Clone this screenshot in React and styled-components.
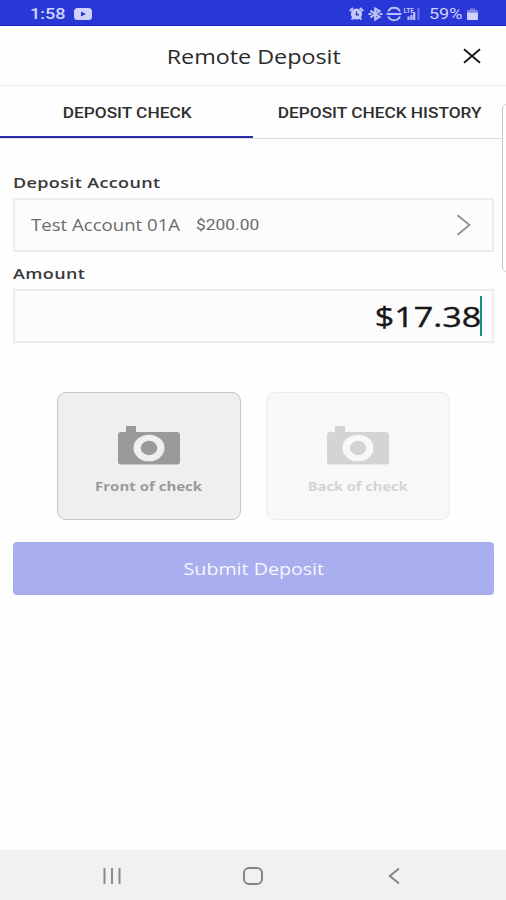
import styled, { createGlobalStyle } from 'styled-components';

const GlobalStyle = createGlobalStyle`
  * {
    box-sizing: border-box;
  }

  body {
    margin: 0;
    background: #fefefe;
    font-family: 'Open Sans', 'Noto Sans', sans-serif;
  }
`;

const Screen = styled.div`
  position: relative;
  width: 506px;
  height: 900px;
  display: flex;
  flex-direction: column;
  background: #fefefe;
  overflow: hidden;
`;

// Wide lettering, stretched from the side the text is aligned to
const Wide = styled.span`
  display: inline-block;
  white-space: pre;
  transform: scaleX(${({ $scale }) => $scale || 1.2});
  transform-origin: ${({ $from }) => $from || 'center'} center;
`;

const StatusBar = styled.div`
  height: 26px;
  padding: 2px 28px 0 30px;
  display: flex;
  align-items: center;
  justify-content: space-between;
  background: #2937d6;
  border-bottom: 1px solid #1b22c4;
  color: #d0d4fb;
  font-family: Roboto, sans-serif;
  font-size: 15px;
`;

const StatusGroup = styled.div`
  display: flex;
  align-items: center;
`;

const Clock = styled.div`
  width: 44px;
  font-weight: 500;
`;

const Battery = styled.div`
  width: 38px;
  margin-left: 8px;
`;

const Header = styled.header`
  height: 60px;
  padding-top: 1px;
  display: grid;
  grid-template-columns: 69px 1fr 68px;
  align-items: center;
  border-bottom: 1px solid #ececec;
`;

const Title = styled.h1`
  grid-column: 2;
  margin: 0;
  text-align: center;
  font-size: 20px;
  font-weight: 400;
  color: #2b2b2b;
`;

const CloseButton = styled.button`
  padding: 0;
  display: flex;
  justify-content: center;
  border: none;
  background: none;
`;

const Tabs = styled.nav`
  height: 53px;
  display: flex;
  border-bottom: 1px solid #dedede;
`;

const Tab = styled.button`
  flex: 1;
  height: 52px;
  padding: 4px 0 0 1px;
  border: none;
  border-bottom: 2px solid ${({ $active }) => ($active ? '#2a2ba8' : 'transparent')};
  background: none;
  color: #2e2e2e;
  font-family: Roboto, sans-serif;
  font-size: 14.5px;
  font-weight: 500;
`;

const Form = styled.main`
  flex: 1;
  padding: 32px 12px 0 13px;
  display: flex;
  flex-direction: column;
`;

const Label = styled.label`
  height: 22px;
  line-height: 22px;
  margin-bottom: 5px;
  font-size: 15px;
  font-weight: 600;
  letter-spacing: 0.3px;
  color: #383838;
`;

const Field = styled.div`
  height: 54px;
  display: flex;
  align-items: center;
  background: #fcfcfc;
  border: 2px solid #ededed;
`;

const AccountField = styled(Field)`
  padding: 0 21px 0 16px;
  margin-bottom: 10px;
  color: #6b6b6b;
`;

const AccountName = styled.div`
  width: 165px;
  font-size: 15.5px;
`;

const AccountBalance = styled.div`
  flex: 1;
  font-family: Roboto, sans-serif;
  font-size: 14.5px;
`;

const AmountField = styled(Field)`
  padding-right: 10px;
  justify-content: flex-end;
  font-size: 28px;
  font-weight: 500;
  color: #181818;
  -webkit-text-stroke: 0.4px #181818;
`;

const Caret = styled.div`
  width: 2px;
  height: 40px;
  margin-left: -1px;
  background: #16917d;
`;

const CheckSides = styled.div`
  margin: 49px 0 22px;
  display: flex;
  justify-content: center;
  gap: 25px;
`;

const CheckCard = styled.button`
  width: 184px;
  height: 128px;
  padding: 33px 0 0;
  display: flex;
  flex-direction: column;
  align-items: center;
  border: 1.5px solid ${({ $muted }) => ($muted ? '#ebebeb' : '#c6c6c6')};
  border-radius: 9px;
  background: ${({ $muted }) => ($muted ? '#f8f8f8' : '#efefef')};
  color: ${({ $muted }) => ($muted ? '#d4d4d4' : '#9a9a9a')};
  font-family: inherit;
  font-size: 12.5px;
  font-weight: 700;
`;

const CardLabel = styled.div`
  margin-top: 13px;
  line-height: 18px;
`;

const SubmitButton = styled.button`
  height: 53px;
  padding: 0;
  border: none;
  border-radius: 4px;
  background: #a9aeef;
  color: #f6f7ff;
  font-family: inherit;
  font-size: 17px;
`;

const NavBar = styled.footer`
  height: 50px;
  padding: 1px 41px 0;
  display: grid;
  grid-template-columns: repeat(3, 1fr);
  align-items: center;
  justify-items: center;
  background: #f1f1f1;
`;

// Edge panel handle, floats over the right side of the screen
const EdgePanel = styled.div`
  position: absolute;
  top: 104px;
  right: -8px;
  width: 12px;
  height: 168px;
  border: 1.5px solid #c9c9c9;
  border-radius: 5px;
  background: #fefefe;
`;

const YoutubeIcon = () => (
  <svg width="18" height="12" viewBox="0 0 18 12">
    <rect width="18" height="12" rx="3.5" fill="#cfd3fb" />
    <path d="M7 3.4 12 6 7 8.6Z" fill="#2937d6" />
  </svg>
);

const StatusIcons = () => (
  <svg width="72" height="16" viewBox="0 0 72 16" fill="none" stroke="#bcc2f8" strokeWidth="1.6">
    <circle cx="7.5" cy="8" r="5.6" fill="#c4c9f9" stroke="none" />
    <path d="M.8 5 4 2M14.2 5 11 2M2.5 13.5l2-1.8M12.5 13.5 10.5 11.7" strokeWidth="2.2" />
    <path d="M7.5 5.5V8.7H10" stroke="#2937d6" strokeWidth="1.4" />
    <path d="M21.5 4.6 30.5 11 26.2 13.5v-11L30.5 5 21.5 11.4" strokeWidth="2.1" />
    <path d="M19.5 8h3M30.5 8h3" strokeWidth="2" />
    <path d="M39.3 5.5a6.2 5.8 0 0 1 11.6 0M39.3 10.5a6.2 5.8 0 0 0 11.6 0M37.500 8H52.500" strokeWidth="2" />
    <path d="M59.5 14V10.500M62.5 14V9M65.2 14V6" strokeWidth="2.2" />
    <path d="M69.5 14V2" strokeWidth="2" opacity=".45" />
    <text x="54.5" y="6.5" fontSize="6.5" fontWeight="700" fontFamily="Roboto, sans-serif" fill="#c4c9f9" stroke="none">LTE</text>
  </svg>
);

const BatteryIcon = () => (
  <svg width="11" height="14" viewBox="0 0 11 14" fill="#cfd3fb">
    <path d="M3 1.5h5V3h2a1 1 0 0 1 1 1v1.5H0V4a1 1 0 0 1 1-1h2Z" opacity=".5" />
    <path d="M0 5.5h11V12a1 1 0 0 1-1 1H1a1 1 0 0 1-1-1Z" />
  </svg>
);

const CloseIcon = () => (
  <svg width="18" height="16" viewBox="0 0 18 16" fill="none" stroke="#1c1c1c" strokeWidth="2">
    <path d="M1 1.2 17 14.8M17 1.2 1 14.8" />
  </svg>
);

const ChevronIcon = () => (
  <svg width="15" height="22" viewBox="0 0 15 22" fill="none" stroke="#8f8f8f" strokeWidth="1.8">
    <path d="M1.5 1.3 13.5 11 1.5 20.7" />
  </svg>
);

const CameraIcon = ({ hole }) => (
  <svg width="62" height="39" viewBox="0 0 62 39">
    <path d="M3 6h5V0h10v6h41a3 3 0 0 1 3 3v26.5a3 3 0 0 1-3 3H3a3 3 0 0 1-3-3V9a3 3 0 0 1 3-3Z" fill="currentColor" />
    <ellipse cx="31" cy="22" rx="15.5" ry="13.3" fill={hole} />
    <ellipse cx="31" cy="22" rx="8.3" ry="7.2" fill="currentColor" />
  </svg>
);

const RecentsIcon = () => (
  <svg width="20" height="18" viewBox="0 0 20 18" stroke="#8a8a8a" strokeWidth="2">
    <path d="M2.5 1V17M10 1V17M17.5 1V17" />
  </svg>
);

const HomeIcon = () => (
  <svg width="20" height="18" viewBox="0 0 20 18" fill="none" stroke="#858585" strokeWidth="2">
    <rect x="1" y="1" width="18" height="16" rx="5" />
  </svg>
);

const BackIcon = () => (
  <svg width="12" height="18" viewBox="0 0 12 18" fill="none" stroke="#858585" strokeWidth="2">
    <path d="M11 1.5 1.8 9 11 16.5" />
  </svg>
);

const App = () => {
  return (<>
    <GlobalStyle />
    <Screen>
      <StatusBar>
        <StatusGroup>
          <Clock><Wide $from="left" $scale={1.2}>1:58</Wide></Clock>
          <YoutubeIcon />
        </StatusGroup>
        <StatusGroup>
          <StatusIcons />
          <Battery><Wide $from="left" $scale={1.2}>59%</Wide></Battery>
          <BatteryIcon />
        </StatusGroup>
      </StatusBar>

      <Header>
        <Title><Wide $scale={1.165}>Remote Deposit</Wide></Title>
        <CloseButton aria-label="Close"><CloseIcon /></CloseButton>
      </Header>

      <Tabs>
        <Tab $active><Wide $scale={1.19}>DEPOSIT CHECK</Wide></Tab>
        <Tab><Wide $scale={1.19}>DEPOSIT CHECK HISTORY</Wide></Tab>
      </Tabs>

      <Form>
        <Label><Wide $from="left">Deposit Account</Wide></Label>
        <AccountField>
          <AccountName><Wide $from="left">Test Account 01A</Wide></AccountName>
          <AccountBalance><Wide $from="left">$200.00</Wide></AccountBalance>
          <ChevronIcon />
        </AccountField>

        <Label><Wide $from="left">Amount</Wide></Label>
        <AmountField>
          <Wide $from="right" $scale={1.22}>$17.38</Wide>
          <Caret />
        </AmountField>

        <CheckSides>
          <CheckCard>
            <CameraIcon hole="#efefef" />
            <CardLabel><Wide>Front of check</Wide></CardLabel>
          </CheckCard>
          <CheckCard $muted>
            <CameraIcon hole="#f8f8f8" />
            <CardLabel><Wide $scale={1.17}>Back of check</Wide></CardLabel>
          </CheckCard>
        </CheckSides>

        <SubmitButton><Wide $scale={1.155}>Submit Deposit</Wide></SubmitButton>
      </Form>

      <NavBar>
        <RecentsIcon />
        <HomeIcon />
        <BackIcon />
      </NavBar>
      <EdgePanel />
    </Screen>
  </>);
};

export default App;
